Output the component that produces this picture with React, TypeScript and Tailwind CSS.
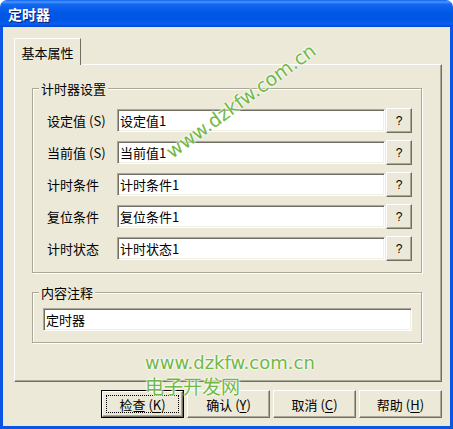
import React from "react";

const FONT = "font-['Noto_Sans_CJK_SC','Noto_Sans',sans-serif]";
const inputCls =
  "bg-white border border-t-[#aca899] border-l-[#aca899] border-b-white border-r-white shadow-[inset_1px_1px_0_#716f64,inset_-1px_-1px_0_#f1efe2] h-[23px] flex items-center pl-[2px] text-[13px] leading-none text-black";
const btnCls =
  "bg-[#ece9d8] border border-t-white border-l-white border-b-[#716f64] border-r-[#716f64] shadow-[inset_-1px_-1px_0_#aca899] flex items-center justify-center text-black";

function Row({ label, suffix, value }: { label: string; suffix?: string; value: string }) {
  return (
    <div className="flex items-center h-[25px]">
      <div className="w-[70px] text-[13px] leading-none text-black flex items-center">
        <span>{label}</span>
        {suffix && <span className="ml-[3px]">{suffix}</span>}
      </div>
      <div className={`${inputCls} w-[268px]`}>{value}</div>
      <div className={`${btnCls} ml-[1px] w-[26px] h-[25px] text-[12px] font-['Liberation_Sans',sans-serif]`}>?</div>
    </div>
  );
}

function Btn({ text, k, focus }: { text: string; k: string; focus?: boolean }) {
  const inner = (
    <span className="text-[13px] leading-none flex items-center">
      <span>{text}</span>
      <span className="ml-[3px]">
        (<span className="underline underline-offset-2">{k}</span>)
      </span>
    </span>
  );
  if (focus) {
    return (
      <div className="w-[83px] h-[28px] border border-black">
        <div className={`${btnCls} w-full h-full relative`}>
          <div className="absolute inset-[3px] border border-dotted border-black" />
          {inner}
        </div>
      </div>
    );
  }
  return <div className={`${btnCls} w-[83px] h-[28px]`}>{inner}</div>;
}

const wm =
  "text-[#72b845] [text-shadow:0_0_2px_#fff,0_0_2px_#fff,0_0_3px_#fff] whitespace-nowrap pointer-events-none";

export default function App() {
  return (
    <div className={`relative w-[453px] h-[429px] bg-white overflow-hidden ${FONT}`}>
      <div className="w-[453px] h-[429px] flex flex-col">
        {/* Title bar */}
        <div className="h-[27px] rounded-t-[7px] bg-[linear-gradient(180deg,#0a62f2_0%,#4896fb_7%,#1468f0_16%,#0058e8_45%,#0056e4_75%,#0a5ff0_88%,#0046d2_100%)] flex items-center pl-[8px]">
          <span className="text-white font-bold text-[14px] leading-none [text-shadow:1px_1px_0_#0a1e7a]">定时器</span>
        </div>
        {/* Body */}
        <div className="flex-1 bg-[#ece9d8] border-x-[3px] border-b-[3px] border-[#0a55e3] pt-[11px] pl-[11px] pr-[8px] flex flex-col">
          {/* Tab strip */}
          <div className="flex h-[26px] relative z-10">
            <div className="w-[67px] h-[27px] bg-[#ece9d8] border-t border-l border-r border-t-white border-l-white border-r-[#716f64] flex items-center justify-center text-[13px] leading-none text-black">
              基本属性
            </div>
          </div>
          {/* Tab panel */}
          <div className="w-[428px] h-[318px] border border-t-white border-l-white border-r-[#716f64] border-b-[#716f64] shadow-[inset_-1px_-1px_0_#aca899] pl-[17px] pt-[23px] flex flex-col">
            {/* Group 1 */}
            <div className="relative w-[390px] h-[185px] border border-[#aca899] shadow-[inset_1px_1px_0_#fff,1px_1px_0_#fff] pl-[14px] pt-[19px] flex flex-col gap-[7px]">
              <span className="absolute -top-[8px] left-[6px] bg-[#ece9d8] px-[2px] text-[13px] leading-[15px] text-black">计时器设置</span>
              <Row label="设定值" suffix="(S)" value="设定值1" />
              <Row label="当前值" suffix="(S)" value="当前值1" />
              <Row label="计时条件" value="计时条件1" />
              <Row label="复位条件" value="复位条件1" />
              <Row label="计时状态" value="计时状态1" />
            </div>
            {/* Group 2 */}
            <div className="relative mt-[19px] w-[390px] h-[51px] border border-[#aca899] shadow-[inset_1px_1px_0_#fff,1px_1px_0_#fff] pl-[10px] pt-[15px]">
              <span className="absolute -top-[8px] left-[6px] bg-[#ece9d8] px-[2px] text-[13px] leading-[15px] text-black">内容注释</span>
              <div className={`${inputCls} w-[369px]`}>定时器</div>
            </div>
          </div>
          {/* Buttons */}
          <div className="mt-[8px] w-[428px] flex justify-end gap-[3px]">
            <Btn text="检查" k="K" focus />
            <Btn text="确认" k="Y" />
            <Btn text="取消" k="C" />
            <Btn text="帮助" k="H" />
          </div>
        </div>
      </div>

      {/* Watermarks */}
      <div
        className={`${wm} absolute left-[241px] top-[101px] -translate-x-1/2 -translate-y-1/2 rotate-[-36deg] text-[19px] leading-none font-['DejaVu_Sans',sans-serif]`}
      >
        www.dzkfw.com.cn
      </div>
      <div className={`${wm} absolute left-[145px] top-[353px] text-[18px] leading-[20px] font-['DejaVu_Sans',sans-serif]`}>
        www.dzkfw.com.cn
      </div>
      <div className={`${wm} absolute left-[145px] top-[376px] text-[19px] leading-[20px]`}>电子开发网</div>
    </div>
  );
}
